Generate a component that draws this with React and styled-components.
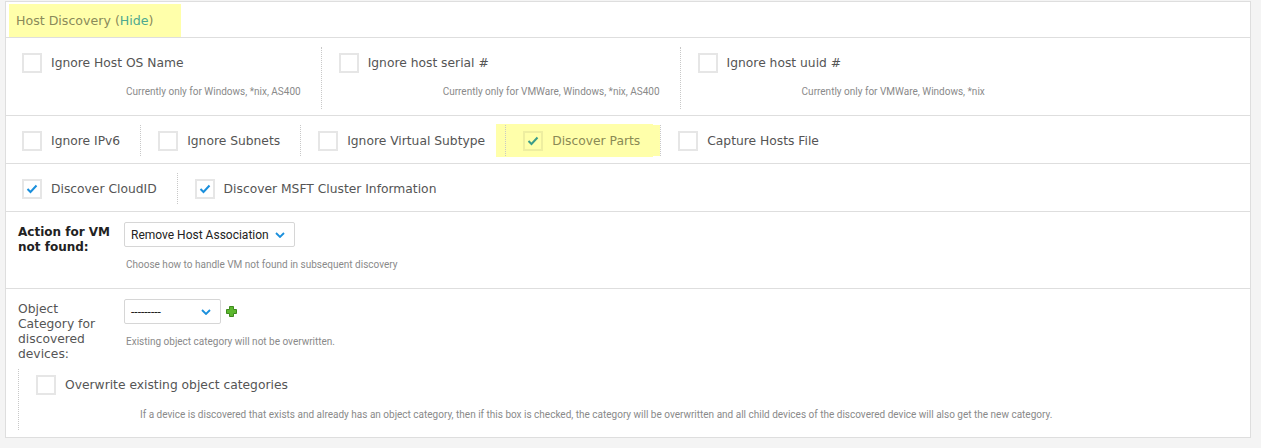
import React from "react";
import styled, { createGlobalStyle } from "styled-components";

const GlobalStyle = createGlobalStyle`
  body {
    margin: 0;
    background: #f4f4f4;
    font-family: "DejaVu Sans", Verdana, sans-serif;
  }
`;

const Card = styled.div`
  margin: 1px 0 0 5px;
  width: 1246px;
  box-sizing: border-box;
  background: #fff;
  border: 1px solid #dedede;
  font-size: 12.3px;
  color: #555;
`;

const Header = styled.div`
  height: 36px;
  display: flex;
  align-items: stretch;
  padding: 2px 0 0 3px;
  box-sizing: border-box;
  border-bottom: 1px solid #dedede;
`;

const HeaderMark = styled.div`
  background: #ffffaa;
  width: 165px;
  padding: 0 0 0 7px;
  display: flex;
  align-items: center;
  color: #8a8a5a;
  font-size: 12.6px;
`;

const HideLink = styled.span`
  color: #4ea890;
`;

const Row = styled.div`
  display: flex;
  align-items: flex-start;
  padding: ${(p) => p.$pad || "9px 0 7px"};
  border-bottom: ${(p) => (p.$last ? "none" : "1px solid #dedede")};
`;

const Item = styled.div`
  display: flex;
  flex-direction: column;
  padding: ${(p) => (p.$tall ? "6px 20px 11px 17px" : "6px 20px 5px 17px")};
  border-left: ${(p) => (p.$first ? "none" : "1px dotted #c8c8c8")};
  margin-left: ${(p) => (p.$first ? "-1px" : "0")};
  background: ${(p) => (p.$mark ? "#ffffaa" : "transparent")};
  box-shadow: ${(p) => (p.$mark ? "-8px 0 0 1px #ffffaa" : "none")};
`;

const CheckLine = styled.label`
  display: flex;
  align-items: center;
  gap: 9px;
  height: 20px;
  white-space: nowrap;
  color: ${(p) => (p.$mark ? "#8a8a55" : "#555")};
`;

const Box = styled.span`
  width: 20px;
  height: 20px;
  box-sizing: border-box;
  border: 2px solid ${(p) => (p.$mark ? "#eeeea0" : "#e6e6e6")};
  background: ${(p) => (p.$mark ? "transparent" : "#fff")};
  display: flex;
  align-items: center;
  justify-content: center;
  flex-shrink: 0;
`;

const Help = styled.div`
  margin: ${(p) => p.$margin || "13px 0 0 104px"};
  font-family: Roboto, "Liberation Sans", sans-serif;
  font-size: 10px;
  line-height: 12px;
  color: #8a8a8a;
  white-space: nowrap;
`;

const FieldRow = styled.div`
  display: flex;
  align-items: flex-start;
`;

const LabelCell = styled.div`
  width: 100px;
  flex-shrink: 0;
  margin: 3px 6px 0 0;
`;

const FieldLabel = styled.div`
  max-width: ${(p) => p.$max || 100}px;
  line-height: 15px;
  font-size: ${(p) => (p.$bold ? "12px" : "12.3px")};
  font-weight: ${(p) => (p.$bold ? "bold" : "normal")};
  color: ${(p) => (p.$bold ? "#222" : "#555")};
`;

const Control = styled.div`
  display: flex;
  flex-direction: column;
`;

const SelectLine = styled.div`
  display: flex;
  align-items: center;
  gap: 5px;
`;

const Select = styled.div`
  width: ${(p) => p.$w}px;
  height: 25px;
  box-sizing: border-box;
  border: 1px solid #d6d6d6;
  border-radius: 2px;
  display: flex;
  align-items: center;
  justify-content: space-between;
  padding: 0 9px 0 6px;
  font-family: Roboto, "Liberation Sans", sans-serif;
  font-size: 12px;
  color: #222;
`;

const Nested = styled.div`
  margin: 7px 0 0 0;
  border-left: 1px dotted #c8c8c8;
  padding: 6px 0 9px 17px;
`;

const Check = ({ color = "#1a8fdc" }) => (
  <svg width="12" height="10" viewBox="0 0 12 10">
    <path d="M1.5 5 L4.5 8 L10.5 1.5" fill="none" stroke={color} strokeWidth="2" />
  </svg>
);

const Chevron = () => (
  <svg width="10" height="6" viewBox="0 0 10 6">
    <path d="M1 1 L5 5 L9 1" fill="none" stroke="#1a8fdc" strokeWidth="1.8" />
  </svg>
);

const Plus = () => (
  <svg width="11" height="11" viewBox="0 0 11 11">
    <path
      d="M3.5 0.5 H7.5 V3.5 H10.5 V7.5 H7.5 V10.5 H3.5 V7.5 H0.5 V3.5 H3.5 Z"
      fill="#5cb82e"
      stroke="#3f8a1e"
      strokeWidth="1"
    />
  </svg>
);

const CheckItem = ({ label, checked, mark }) => (
  <CheckLine $mark={mark}>
    <Box $mark={mark}>{checked && <Check color={mark ? "#3c9c8a" : "#1a8fdc"} />}</Box>
    {label}
  </CheckLine>
);

const App = () => {
  return (
    <>
      <GlobalStyle />
      <Card>
        <Header>
          <HeaderMark>
            <span>
              Host Discovery (<HideLink>Hide</HideLink>)
            </span>
          </HeaderMark>
        </Header>

        <Row $pad="9px 0 6px">
          <Item $first $tall>
            <CheckItem label="Ignore Host OS Name" />
            <Help>Currently only for Windows, *nix, AS400</Help>
          </Item>
          <Item $tall>
            <CheckItem label="Ignore host serial #" />
            <Help>Currently only for VMWare, Windows, *nix, AS400</Help>
          </Item>
          <Item $tall>
            <CheckItem label="Ignore host uuid #" />
            <Help>Currently only for VMWare, Windows, *nix</Help>
          </Item>
        </Row>

        <Row>
          <Item $first>
            <CheckItem label="Ignore IPv6" />
          </Item>
          <Item>
            <CheckItem label="Ignore Subnets" />
          </Item>
          <Item>
            <CheckItem label="Ignore Virtual Subtype" />
          </Item>
          <Item $mark>
            <CheckItem label="Discover Parts" checked mark />
          </Item>
          <Item>
            <CheckItem label="Capture Hosts File" />
          </Item>
        </Row>

        <Row>
          <Item $first>
            <CheckItem label="Discover CloudID" checked />
          </Item>
          <Item>
            <CheckItem label="Discover MSFT Cluster Information" checked />
          </Item>
        </Row>

        <Row $pad="10px 12px 17px">
          <FieldRow>
            <LabelCell>
              <FieldLabel $bold>Action for VM not found:</FieldLabel>
            </LabelCell>
            <Control>
              <Select $w={171}>
                Remove Host Association
                <Chevron />
              </Select>
              <Help $margin="12px 0 0 2px">
                Choose how to handle VM not found in subsequent discovery
              </Help>
            </Control>
          </FieldRow>
        </Row>

        <Row $pad="10px 12px 7px" $last>
          <div>
            <FieldRow>
              <LabelCell>
                <FieldLabel $max={92}>Object Category for discovered devices:</FieldLabel>
              </LabelCell>
              <Control>
                <SelectLine>
                  <Select $w={97}>
                    ---------
                    <Chevron />
                  </Select>
                  <Plus />
                </SelectLine>
                <Help $margin="12px 0 0 2px">
                  Existing object category will not be overwritten.
                </Help>
              </Control>
            </FieldRow>
            <Nested>
              <CheckItem label="Overwrite existing object categories" />
              <Help $margin="14px 0 0 104px">
                If a device is discovered that exists and already has an object category, then
                if this box is checked, the category will be overwritten and all child devices
                of the discovered device will also get the new category.
              </Help>
            </Nested>
          </div>
        </Row>
      </Card>
    </>
  );
};

export default App;
